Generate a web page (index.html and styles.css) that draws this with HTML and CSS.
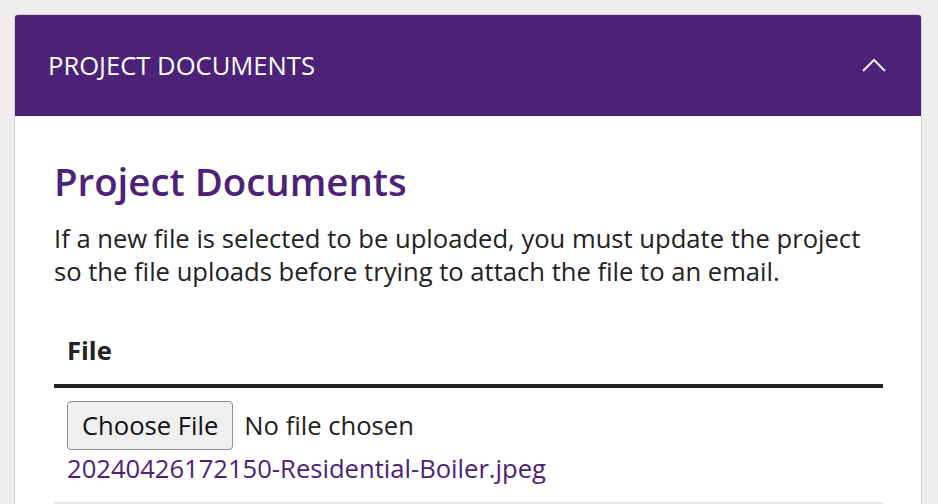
FILE: index.html
```html
<!DOCTYPE html>
<html lang="en">
<head>
    <meta charset="UTF-8">
    <meta name="viewport" content="width=device-width, initial-scale=1.0">
    <title>Project Documents</title>
    <link rel="stylesheet" href="styles.css">
</head>
<body>
    <div class="panel">
        <div class="panel-head">
            <span class="panel-title">PROJECT DOCUMENTS</span>
            <svg class="chevron" width="24" height="14" viewBox="0 0 24 14">
                <path d="M1 13 L12 2 L23 13" fill="none" stroke="#f3e9fb" stroke-width="2"/>
            </svg>
        </div><!-- panel-head -->
        <div class="panel-body">
            <h2 class="doc-title">Project Documents</h2>
            <p class="doc-note">If a new file is selected to be uploaded, you must update the project so the file uploads before trying to attach the file to an email.</p>
            <table class="doc-table">
                <thead>
                    <tr><th>File</th></tr>
                </thead>
                <tbody>
                    <tr>
                        <td>
                            <div class="file-pick">
                                <button class="file-btn" type="button">Choose File</button>
                                <span class="file-none">No file chosen</span>
                            </div>
                            <a class="file-link" href="#">20240426172150-Residential-Boiler.jpeg</a>
                        </td>
                    </tr>
                </tbody>
            </table>
        </div><!-- panel-body -->
    </div><!-- panel -->
</body>
</html>
```

FILE: styles.css
```css
html, body{
    margin: 0;
    padding: 0;
}
body{
    background: #efedf0;
    font-family: "Open Sans", "Noto Sans", sans-serif;
    color: #222;
    padding: 14px 16px 0 14px;
}
.panel{
    background: #fff;
    border: 1px solid #d2d0d6;
    border-bottom: 0;
    border-radius: 4px 4px 0 0;
    overflow: hidden;
    height: 490px;
}
.panel-head{
    background: #4b2277;
    height: 101px;
    display: flex;
    align-items: center;
    justify-content: space-between;
    padding: 0 35px 0 33px;
}
.panel-title{
    color: #fff;
    font-size: 25.6px;
}
.chevron{
    display: block;
    margin-top: -2px;
}
.panel-body{
    padding: 40px 38px 0 39px;
}
.doc-title{
    margin: 0;
    color: #4b2277;
    font-size: 38.4px;
    font-weight: 600;
    line-height: 50px;
}
.doc-note{
    margin: 16px 0 0;
    font-size: 25.6px;
    line-height: 33px;
}
.doc-table{
    width: 100%;
    border-collapse: collapse;
    margin-top: 36px;
}
.doc-table th{
    text-align: left;
    font-size: 25.6px;
    font-weight: 700;
    line-height: 33px;
    padding: 10px 13px 17px;
    border-bottom: 4px solid #222;
}
.doc-table td{
    padding: 13px 13px 17px;
    border-bottom: 2px solid #e4e3e6;
}
.file-pick{
    display: flex;
    align-items: center;
    gap: 11px;
}
.file-btn{
    font-family: inherit;
    font-size: 25.6px;
    color: #111;
    background: #efefef;
    border: 1px solid #8e8e8e;
    border-radius: 4px;
    height: 49px;
    padding: 0 14px;
}
.file-none{
    font-size: 25.6px;
}
.file-link{
    display: block;
    color: #4b2277;
    text-decoration: none;
    font-size: 25.6px;
    line-height: 33px;
    margin-top: 2px;
}
```
